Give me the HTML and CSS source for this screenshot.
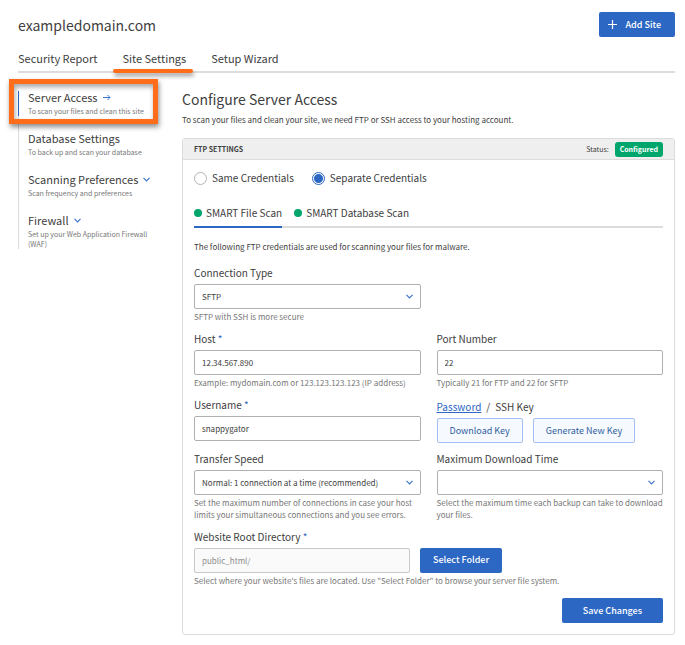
FILE: index.html
```html
<!DOCTYPE html>
<html lang="en">
	<head>
		<title>Site Settings</title>
		<meta charset="UTF-8">
		<meta name="viewport" content="width=device-width, initial-scale=1">
		<link rel="stylesheet" href="styles.css">
	</head>
	<body>
		<header class="top">
			<h1>exampledomain.com</h1>
			<button type="button" class="btn btn-add">
				<svg width="9" height="9" viewBox="0 0 9 9"><path d="M4.5 0v9M0 4.5h9" stroke="#fff" stroke-width="1.2"/></svg>
				Add Site
			</button>
		</header>

		<nav class="main-nav">
			<a href="#">Security Report</a>
			<a href="#" class="active">Site Settings</a>
			<a href="#">Setup Wizard</a>
		</nav>

		<div class="page">
			<aside class="sidebar">
				<a href="#" class="side-item selected">
					<span class="side-title">Server Access
						<svg class="arrow" width="8" height="7" viewBox="0 0 8 7"><path d="M0 3.5h7M4.5 1L7 3.5L4.5 6" fill="none" stroke="#3d74cc"/></svg>
					</span>
					<small>To scan your files and clean this site</small>
				</a>
				<a href="#" class="side-item">
					<span class="side-title">Database Settings</span>
					<small>To back up and scan your database</small>
				</a>
				<a href="#" class="side-item">
					<span class="side-title">Scanning Preferences
						<svg width="7" height="5" viewBox="0 0 7 5"><path d="M.5 .8L3.5 3.8L6.5 .8" fill="none" stroke="#3d74cc" stroke-width="1.2"/></svg>
					</span>
					<small>Scan frequency and preferences</small>
				</a>
				<a href="#" class="side-item">
					<span class="side-title">Firewall
						<svg width="7" height="5" viewBox="0 0 7 5"><path d="M.5 .8L3.5 3.8L6.5 .8" fill="none" stroke="#3d74cc" stroke-width="1.2"/></svg>
					</span>
					<small>Set up your Web Application Firewall (WAF)</small>
				</a>
			</aside>

			<main>
				<h2>Configure Server Access</h2>
				<p class="intro">To scan your files and clean your site, we need FTP or SSH access to your hosting account.</p>

				<form class="panel">
					<div class="panel-head">
						<h3>FTP SETTINGS</h3>
						<span class="status">Status: <span class="badge">Configured</span></span>
					</div>

					<div class="panel-body">
						<div class="radios">
							<label><input type="radio" name="credentials">Same Credentials</label>
							<label><input type="radio" name="credentials" checked>Separate Credentials</label>
						</div>

						<div class="tabs">
							<button type="button" class="tab active"><span class="dot"></span>SMART File Scan</button>
							<button type="button" class="tab"><span class="dot"></span>SMART Database Scan</button>
						</div>

						<p class="note">The following FTP credentials are used for scanning your files for malware.</p>

						<div class="fields">
							<div class="field first-col">
								<label for="type">Connection Type</label>
								<div class="select">
									<select id="type"><option>SFTP</option></select>
									<svg width="7" height="5" viewBox="0 0 7 5"><path d="M.5 .8L3.5 3.8L6.5 .8" fill="none" stroke="#3d74cc" stroke-width="1.2"/></svg>
								</div>
								<p class="hint">SFTP with SSH is more secure</p>
							</div>

							<div class="field first-col">
								<label for="host">Host <span class="req">*</span></label>
								<input type="text" id="host" value="12.34.567.890">
								<p class="hint">Example: mydomain.com or 123.123.123.123 (IP address)</p>
							</div>
							<div class="field">
								<label for="port">Port Number</label>
								<input type="text" id="port" value="22">
								<p class="hint">Typically 21 for FTP and 22 for SFTP</p>
							</div>

							<div class="field">
								<label for="user">Username <span class="req">*</span></label>
								<input type="text" id="user" value="snappygator">
							</div>
							<div class="field">
								<div class="auth"><a href="#">Password</a><span>/</span><span>SSH Key</span></div>
								<div class="keys">
									<button type="button" class="btn btn-light">Download Key</button>
									<button type="button" class="btn btn-light">Generate New Key</button>
								</div>
							</div>

							<div class="field">
								<label for="speed">Transfer Speed</label>
								<div class="select">
									<select id="speed"><option>Normal: 1 connection at a time (recommended)</option></select>
									<svg width="7" height="5" viewBox="0 0 7 5"><path d="M.5 .8L3.5 3.8L6.5 .8" fill="none" stroke="#3d74cc" stroke-width="1.2"/></svg>
								</div>
								<p class="hint">Set the maximum number of connections in case your host limits your simultaneous connections and you see errors.</p>
							</div>
							<div class="field">
								<label for="maxtime">Maximum Download Time</label>
								<div class="select">
									<select id="maxtime"><option></option></select>
									<svg width="7" height="5" viewBox="0 0 7 5"><path d="M.5 .8L3.5 3.8L6.5 .8" fill="none" stroke="#3d74cc" stroke-width="1.2"/></svg>
								</div>
								<p class="hint">Select the maximum time each backup can take to download your files.</p>
							</div>

							<div class="field wide">
								<label for="root">Website Root Directory <span class="req">*</span></label>
								<div class="folder">
									<input type="text" id="root" value="public_html/" disabled>
									<button type="button" class="btn">Select Folder</button>
								</div>
								<p class="hint">Select where your website's files are located. Use "Select Folder" to browse your server file system.</p>
							</div>
						</div>

						<div class="actions">
							<button type="submit" class="btn btn-save">Save Changes</button>
						</div>
					</div>
				</form>
			</main>
		</div>
	</body>
</html>
```

FILE: styles.css
```css
* {
	box-sizing: border-box;
}

body {
	margin: 0;
	padding: 12px 10px 10px 18px;
	background: #fff;
	color: #404040;
	font-family: "Noto Sans CJK SC", "Open Sans", sans-serif;
	font-size: 10px;
	line-height: 16px;
}

h1, h2, h3, p {
	margin: 0;
	font-weight: normal;
}

a {
	color: inherit;
	text-decoration: none;
}

button, input, select {
	font-family: inherit;
	font-size: 8px;
	color: inherit;
}

/* header */
.top {
	display: flex;
	justify-content: space-between;
	align-items: center;
}

h1 {
	font-size: 14px;
	line-height: 24px;
}

.btn {
	height: 25px;
	padding: 0 13px;
	border: 0;
	border-radius: 2px;
	background: #2c67c4;
	color: #fff;
	font-size: 9px;
	font-weight: 500;
	line-height: 16px;
	white-space: nowrap;
}

.btn-add {
	display: flex;
	align-items: center;
	gap: 8px;
	padding: 0 14px 0 9px;
}

.btn-light {
	padding: 0 12px;
	border: 1px solid #a3c0f2;
	background: #f6f9fe;
	color: #2f5f9e;
	font-weight: normal;
}

.main-nav {
	display: flex;
	gap: 25px;
	margin-top: 13px;
	border-bottom: 2px solid #dcdddc;
	font-size: 11px;
}

.main-nav a {
	position: relative;
	padding-bottom: 5px;
}

.main-nav .active::after {
	content: "";
	position: absolute;
	left: -9px;
	right: -7px;
	bottom: -2px;
	height: 4px;
	border-radius: 2px;
	background: #ff6d1b;
	box-shadow: 1px 3px 4px rgba(0, 0, 0, 0.4);
}

.page {
	display: flex;
	align-items: flex-start;
	gap: 24px;
	margin-top: 18px;
}

/* sidebar */
.sidebar {
	flex: 0 0 140px;
	display: flex;
	flex-direction: column;
	gap: 16px;
	border-left: 1px solid #dcdcdc;
}

.side-item {
	position: relative;
	margin-left: -1px;
	padding-left: 9px;
	border-left: 1px solid transparent;
}

.side-title {
	display: flex;
	align-items: center;
	gap: 5px;
	font-size: 11px;
	line-height: 12px;
}

.side-item small {
	display: block;
	margin-top: 3px;
	color: #777;
	font-size: 7px;
	line-height: 10px;
}

.side-item.selected {
	border-left-color: #2c67c4;
}

.side-item.selected::before {
	content: "";
	position: absolute;
	top: -12px;
	right: 0;
	bottom: -8px;
	left: -10px;
	border: 5px solid #ff6d1b;
	box-shadow: 1px 3px 5px rgba(0, 0, 0, 0.45), inset 1px 3px 5px rgba(0, 0, 0, 0.35);
}

/* content */
main {
	flex: 1;
	min-width: 0;
}

h2 {
	font-size: 14px;
	line-height: 16px;
}

.intro {
	margin-top: 5px;
	font-size: 8px;
}

.panel {
	margin-top: 10px;
	border: 1px solid #dcdcdc;
	border-radius: 3px;
}

.panel-head {
	display: flex;
	justify-content: space-between;
	align-items: center;
	height: 21px;
	padding: 0 11px;
	border-bottom: 1px solid #dcdcdc;
	background: #efefef;
}

h3 {
	font-size: 7px;
	font-weight: bold;
}

.status {
	display: flex;
	align-items: center;
	gap: 6px;
	font-size: 7px;
}

.badge {
	padding: 0 5px;
	border-radius: 3px;
	background: #00a66c;
	color: #fff;
	font-weight: bold;
	line-height: 15px;
}

.panel-body {
	padding: 10px 11px 11px;
}

.radios {
	display: flex;
	gap: 18px;
}

.radios label {
	display: flex;
	align-items: center;
	gap: 5px;
}

input[type="radio"] {
	appearance: none;
	width: 13px;
	height: 13px;
	margin: 0;
	border: 1px solid #b5b5b5;
	border-radius: 50%;
	background: #fff;
}

input[type="radio"]:checked {
	border-color: #2c67c4;
	background: radial-gradient(circle, #2c67c4 4px, #fff 5px);
}

.tabs {
	display: flex;
	gap: 12px;
	margin-top: 19px;
	border-bottom: 2px solid #dcdcdc;
}

.tab {
	display: flex;
	align-items: center;
	gap: 4px;
	margin-bottom: -2px;
	padding: 0 0 5px;
	border: 0;
	border-bottom: 2px solid transparent;
	background: none;
	font-size: 10px;
	line-height: 16px;
}

.tab.active {
	border-color: #2c67c4;
}

.dot {
	width: 8px;
	height: 8px;
	border-radius: 50%;
	background: #00a66c;
}

.note {
	margin-top: 11px;
	font-size: 8px;
}

.fields {
	display: grid;
	grid-template-columns: 1fr 1fr;
	gap: 8px 16px;
	margin-top: 10px;
}

.first-col {
	grid-column: 1;
}

.wide {
	grid-column: 1 / 3;
}

.field label {
	display: block;
}

.field input, .select, .keys {
	display: flex;
	width: 100%;
	height: 25px;
	margin: 3px 0 2px;
}

.field input, .select select {
	padding: 0 7px;
	border: 1px solid #b0b0b0;
	border-radius: 2px;
	background: #fff;
}

.select {
	position: relative;
}

.select select {
	appearance: none;
	width: 100%;
}

.select svg {
	position: absolute;
	top: 10px;
	right: 8px;
	pointer-events: none;
}

.req {
	color: #2c67c4;
}

.hint {
	color: #777;
	font-size: 8px;
	line-height: 12px;
}

.auth {
	display: flex;
	gap: 5px;
	padding-top: 2px;
}

.auth a {
	color: #2c67c4;
	text-decoration: underline;
}

.keys {
	gap: 10px;
	margin-bottom: 0;
}

.folder {
	display: flex;
	align-items: center;
	gap: 10px;
}

.folder input {
	flex: 0 1 216px;
}

.folder input:disabled {
	border-color: #c8c8c8;
	background: #fafafa;
	color: #8c8c8c;
}

.actions {
	display: flex;
	justify-content: flex-end;
	margin-top: 11px;
}

.btn-save {
	padding: 0 21px;
}
```
